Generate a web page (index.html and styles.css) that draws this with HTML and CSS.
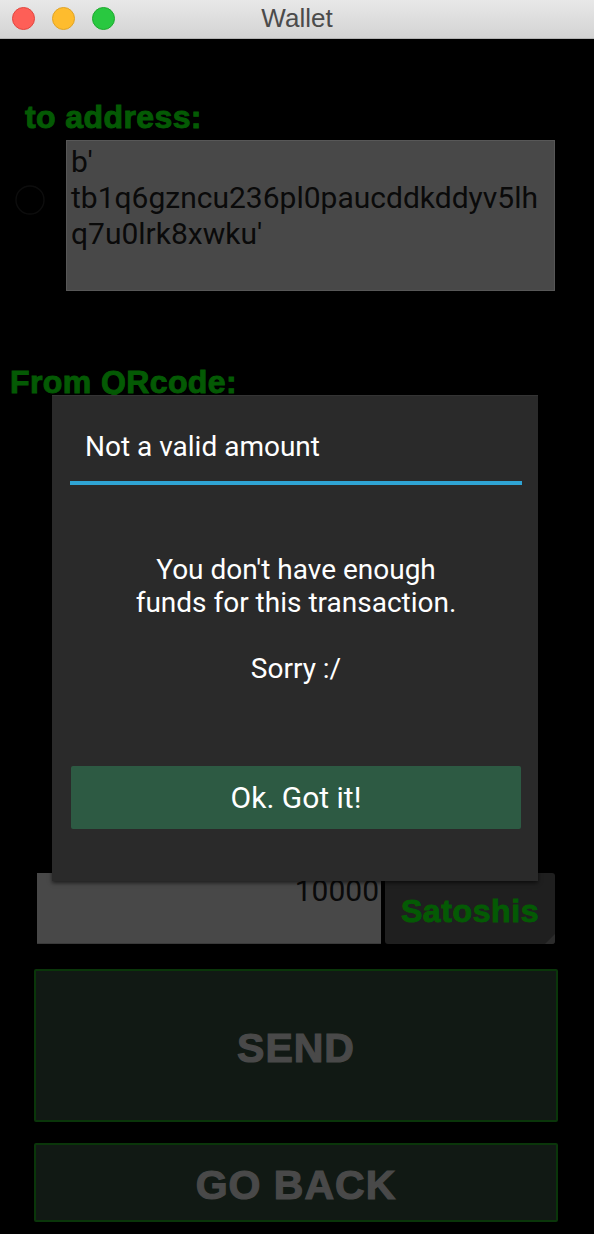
FILE: index.html
```html
<!DOCTYPE html>
<html lang="en">
<head>
<meta charset="utf-8">
<title>Wallet</title>
<link rel="stylesheet" href="styles.css">
</head>
<body>
<div class="window">
  <header class="titlebar">
    <div class="lights">
      <span class="light red"></span>
      <span class="light yellow"></span>
      <span class="light green"></span>
    </div>
    <div class="title">Wallet</div>
    <div class="spacer"></div>
  </header>

  <main class="screen">
    <div class="label label-to">to address:</div>
    <div class="addr-row">
      <svg class="radio" width="30" height="30" viewBox="0 0 30 30"><circle cx="15" cy="15" r="14" fill="none" stroke="#0d0d0d" stroke-width="1.4"/></svg>
      <div class="addr-box">b'<br>tb1q6gzncu236pl0paucddkddyv5lh<br>q7u0lrk8xwku'</div>
    </div>
    <div class="label label-qr">From QRcode:</div>
    <div class="qr-area"></div>
    <div class="amount-row">
      <div class="amount-input">10000</div>
      <div class="unit-spinner">Satoshis<span class="corner"></span></div>
    </div>
    <button class="action send">SEND</button>
    <button class="action back">GO BACK</button>
  </main>

  <div class="modal">
    <div class="dlg-title">Not a valid amount</div>
    <div class="dlg-sep"></div>
    <div class="dlg-body">You don't have enough<br>funds for this transaction.<br><br>Sorry :/</div>
    <button class="dlg-btn">Ok. Got it!</button>
  </div>
</div>
</body>
</html>
```

FILE: styles.css
```css
html, body {
  margin: 0;
  padding: 0;
  background: #000;
}
.window {
  position: relative;
  width: 594px;
  height: 1234px;
  background: #000;
  overflow: hidden;
}
.titlebar {
  height: 38px;
  border-bottom: 1px solid #b3b3b3;
  background: linear-gradient(#e8e8e8, #d3d3d3);
  display: grid;
  grid-template-columns: 1fr auto 1fr;
  align-items: center;
}
.lights {
  display: flex;
  gap: 17px;
  padding-left: 12px;
  margin-top: -2px;
}
.light {
  width: 23px;
  height: 23px;
  border-radius: 50%;
  box-sizing: border-box;
}
.light.red { background: #fe5f57; border: 1px solid #e2463f; }
.light.yellow { background: #febc2e; border: 1px solid #e0a326; }
.light.green { background: #29c840; border: 1px solid #1eaa2e; }
.title {
  font-family: "Liberation Sans", Arial, sans-serif;
  font-size: 26px;
  color: #4b4b4b;
  margin-top: -1px;
}
.screen {
  display: flex;
  flex-direction: column;
  align-items: flex-start;
}
.label {
  font-family: "Liberation Sans", Arial, sans-serif;
  font-weight: bold;
  font-size: 32px;
  line-height: 36px;
  height: 36px;
  letter-spacing: 0.4px;
  color: #045a04;
  -webkit-text-stroke: 1px #045a04;
}
.label-to {
  margin-top: 60px;
  margin-left: 25px;
}
.addr-row {
  margin-top: 5px;
  display: flex;
  align-items: flex-start;
  padding-left: 15px;
  gap: 21px;
}
.radio {
  margin-top: 45px;
  display: block;
}
.addr-box {
  width: 489px;
  height: 151px;
  box-sizing: border-box;
  background: #484848;
  border: 1px solid #575757;
  padding: 3px 4px 0 4px;
  font-family: Roboto, "Noto Sans", sans-serif;
  font-size: 30px;
  line-height: 36px;
  color: #0a0a0a;
}
.label-qr {
  margin-top: 73px;
  margin-left: 10px;
}
.qr-area {
  height: 473px;
}
.amount-row {
  margin-left: 37px;
  display: flex;
  gap: 4px;
  height: 71px;
}
.amount-input {
  width: 344px;
  height: 71px;
  box-sizing: border-box;
  background: #484848;
  border-bottom: 1px solid #3a3a3a;
  text-align: right;
  padding-right: 2px;
  font-family: Roboto, "Noto Sans", sans-serif;
  font-size: 30px;
  line-height: 35px;
  color: #0a0a0a;
}
.unit-spinner {
  position: relative;
  width: 170px;
  height: 71px;
  box-sizing: border-box;
  padding-top: 6px;
  background: #1f1f1f;
  border-radius: 3px;
  display: flex;
  align-items: center;
  justify-content: center;
  font-family: "Liberation Sans", Arial, sans-serif;
  font-weight: bold;
  font-size: 32px;
  letter-spacing: 0.6px;
  color: #045a04;
  -webkit-text-stroke: 1px #045a04;
}
.corner {
  position: absolute;
  right: 0;
  bottom: 0;
  width: 0;
  height: 0;
  border-left: 10px solid transparent;
  border-bottom: 10px solid #2c2c2c;
  border-bottom-right-radius: 3px;
}
.action {
  margin-left: 34px;
  width: 524px;
  box-sizing: border-box;
  background: #111914;
  border: 2px solid #0a360a;
  border-radius: 2px;
  padding: 6px 0 0 0;
  font-family: "Liberation Sans", Arial, sans-serif;
  font-weight: bold;
  font-size: 41px;
  letter-spacing: 1px;
  color: #494949;
  -webkit-text-stroke: 1.2px #494949;
  display: flex;
  align-items: center;
  justify-content: center;
}
.send {
  margin-top: 25px;
  height: 153px;
}
.back {
  margin-top: 21px;
  height: 79px;
}
.modal {
  position: absolute;
  left: 52px;
  top: 395px;
  width: 486px;
  height: 486px;
  box-sizing: border-box;
  background: #2a2a2a;
  border-top: 1px solid #343434;
  box-shadow: 0 2px 4px rgba(0,0,0,0.6);
  padding: 0 16px 0 18px;
  display: flex;
  flex-direction: column;
  font-family: Roboto, "Noto Sans", sans-serif;
  color: #fff;
}
.dlg-title {
  height: 85px;
  box-sizing: border-box;
  padding: 34px 0 0 15px;
  font-size: 28px;
  line-height: 34px;
}
.dlg-sep {
  height: 4px;
  background: #2fa4d4;
}
.dlg-body {
  padding-top: 68px;
  height: 281px;
  box-sizing: border-box;
  text-align: center;
  font-size: 28px;
  line-height: 33px;
}
.dlg-btn {
  margin: 0 1px;
  height: 63px;
  border: none;
  border-radius: 2px;
  background: #2d5a43;
  color: #fff;
  font-family: Roboto, "Noto Sans", sans-serif;
  font-size: 30px;
  padding: 0;
}
```
